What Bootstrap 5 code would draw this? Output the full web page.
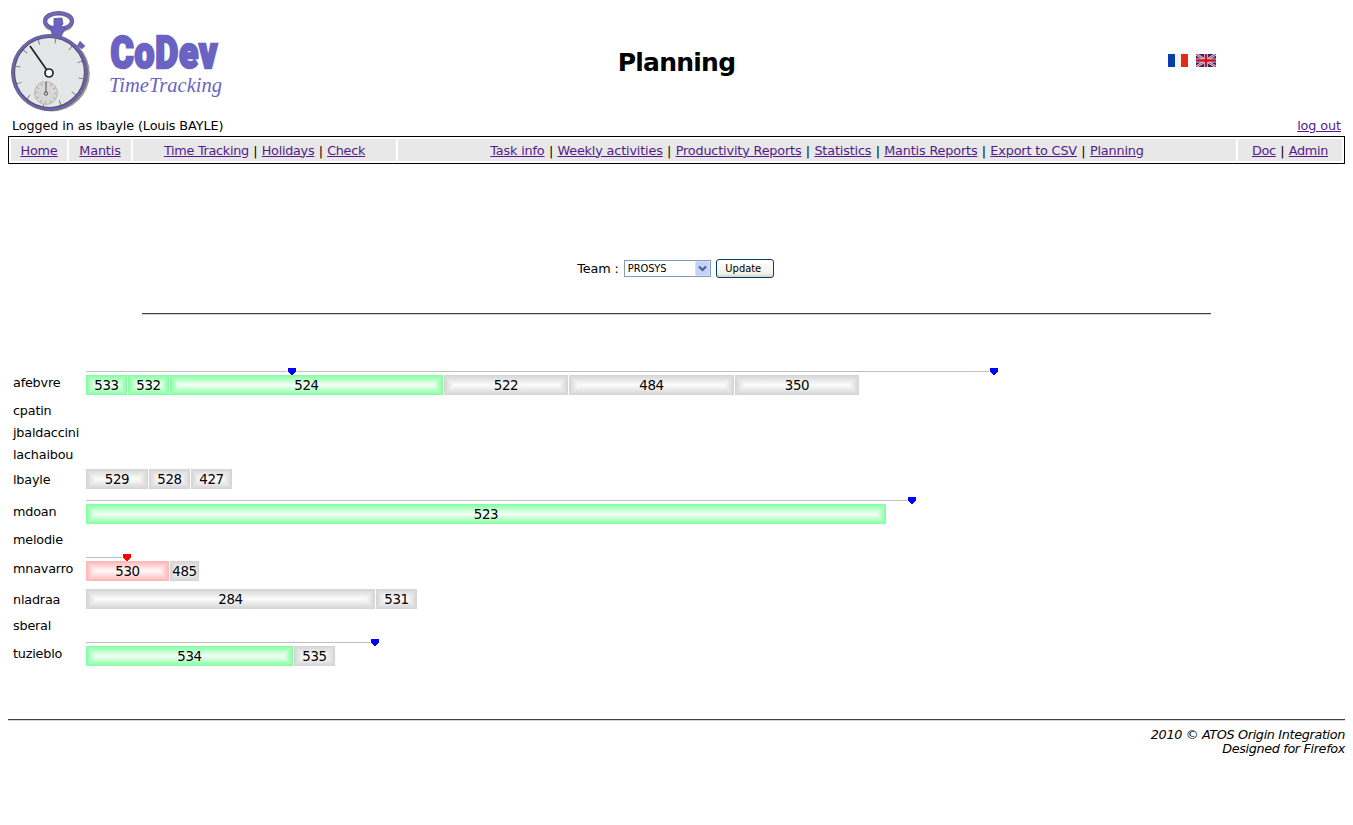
<!DOCTYPE html>
<html lang="en">
<head>
<meta charset="utf-8">
<title>Planning</title>
<link rel="stylesheet" href="https://cdn.jsdelivr.net/npm/bootstrap@5.3.0/dist/css/bootstrap.min.css">
<style>
body{font-family:"DejaVu Sans",Verdana,sans-serif;font-size:12.8px;line-height:15px;color:#000;background:#fff;padding:8px 8px 0;letter-spacing:-.1px}
a{color:#551a8b;text-decoration:underline}
.top-row{height:109px}
.side{flex:1 1 0}
h1{font-size:25px;font-weight:700;letter-spacing:-.75px;line-height:30px;margin:0}
.flag-box{gap:8px}
.flag-box svg{width:20px;height:13px;display:block;margin-bottom:5px}
.flag-box svg:last-child{margin-right:129px}
.login-row{height:19px;padding:1px 4px 0}
.menu-bar{border:1px solid #000;height:28px;padding:2px;gap:2px;letter-spacing:-.16px}
.menu-cell{background:#e8e8e8;height:22px;display:flex;align-items:center;justify-content:center;gap:4.4px}
.cell-home{width:56px}.cell-mantis{width:62px}
.cell-time{width:263px;letter-spacing:-.28px}
.cell-doc{width:104px;letter-spacing:-.28px}
.team-row{height:149px;padding-top:95px;gap:5px;padding-right:2px}
.team-label{padding-top:2px}
.team-select{width:87px;height:17px;border:1px solid #7f9db9;margin-top:1px;font-size:11px;line-height:16px;font-family:"DejaVu Sans Condensed","DejaVu Sans",sans-serif;letter-spacing:-.1px;padding-left:3px}
.team-arrow{width:15px;height:15px}
.update-btn{width:58px;height:19px;border:1px solid #003c74;border-radius:3px;background:linear-gradient(#fff,#f2f1ea 80%,#d6d0c5);font-size:11px;line-height:18px;font-family:"DejaVu Sans Condensed","DejaVu Sans",sans-serif;letter-spacing:0;padding:0 3px 0 0;color:#000}
.rule{border-top:1px solid #404040;border-bottom:1px solid #d4d4d4;height:2px}
.rule-mid{margin:0 134px 51px}
.who{width:73px;padding-bottom:2px;letter-spacing:-.2px}
.plan-row{height:22px;padding-left:5px}
.plan-row.h23{height:23px}
.plan-row.bars{height:29px}
.plan-row.dated{height:34px}
.lane{padding-top:3px;gap:1px}
.dated .lane{padding-top:9px}
.task{height:20px;position:relative;text-align:center;line-height:22px;font-size:13.4px;letter-spacing:-.3px;--e:#d3d3d3;--m:#fcfcfc;background:linear-gradient(var(--e),var(--m) 50%,var(--e))}
.task.ok{--e:#80ff9f;--m:#f6fff8}
.task.late{--e:#ffb3b3;--m:#fffafa}
.task::before,.task::after{content:"";position:absolute;top:0;bottom:0;width:10px}
.task::before{left:0;background:linear-gradient(to right,var(--e),var(--m));clip-path:polygon(0 0,100% 50%,0 100%)}
.task::after{right:0;background:linear-gradient(to left,var(--e),var(--m));clip-path:polygon(100% 0,0 50%,100% 100%)}
.task span{position:relative;z-index:1}
.dates{position:absolute;left:0;top:5px;height:1px;background:#c0c0c0}
.pin{position:absolute;top:2px;width:10px;height:7px;margin-left:-5px;color:#00f}
.pin.late{color:red}
.rule-foot{margin-top:48px}
footer{font-style:italic;line-height:14px;padding-top:7px;text-align:right;letter-spacing:-.35px}
</style>
<script src="https://cdn.jsdelivr.net/npm/bootstrap@5.3.0/dist/js/bootstrap.bundle.min.js"></script>
</head>
<body>
<svg class="d-none"><defs>
<symbol id="pin" viewBox="0 0 10 7"><path fill="#fff" d="M0 0h10v4H0z"/><path fill="currentColor" d="M1 0h8v4h-1v1h-1v1h-1v1h-2v-1h-1v-1h-1v-1h-1z"/></symbol>
</defs></svg>

<header class="d-flex top-row align-items-center">
  <div class="side align-self-start">
    <svg width="220" height="106" viewBox="8 8 220 106" class="d-block">
      <g fill="none">
        <ellipse cx="58.500" cy="22.500" rx="13.500" ry="8.500" stroke="#aaa" stroke-width="3.500"/>
        <ellipse cx="58.500" cy="21" rx="13.500" ry="8" stroke="#57547a" stroke-width="4"/>
        <ellipse cx="58.500" cy="21" rx="13.500" ry="8" stroke="#7068c4" stroke-width="2.400"/>
      </g>
      <path d="M54 18.500l8-.5 1 6-2 2 4 2-4 9h-8l-3-10 4-1z" fill="#6b63c4" stroke="#57529a" stroke-width=".8"/>
      <circle cx="51.800" cy="73.500" r="38" fill="#999"/>
      <circle cx="49.500" cy="72.500" r="38" fill="#6b63c4" stroke="#666"/>
      <circle cx="49.500" cy="72.500" r="35" fill="#e4e7e7" stroke="#55546a" stroke-width="1.200"/>
      <path d="M77 46l3-5 5 5-3 3z" fill="#6b63c4" stroke="#777" stroke-width=".5"/>
      <circle cx="49.500" cy="72.500" r="32" fill="none" stroke="#666" stroke-width="5" pathLength="360" stroke-dasharray="1.400 28.600" stroke-dashoffset="-10"/>
      <circle cx="46" cy="93" r="11.500" fill="#d9d6d6" stroke="#bbb7b7"/>
      <circle cx="46" cy="93" r="9.500" fill="none" stroke="#888" stroke-width="3" pathLength="360" stroke-dasharray="3 27"/>
      <path d="M46 92V82" stroke="#555"/><circle cx="46" cy="93.500" r="1.700" fill="#ddd" stroke="#444"/>
      <path d="M46.500 69.500L30 46" stroke="#222" stroke-width="1.700"/><circle cx="49" cy="73" r="4" fill="#fff" stroke="#222" stroke-width="1.700"/>
      <text x="110.500" y="68" textLength="107.500" lengthAdjust="spacingAndGlyphs" font-family="Roboto" font-weight="900" font-size="43.500" letter-spacing="1" fill="#6b63c4" stroke="#6b63c4" stroke-width="2.400">CoDev</text>
      <text x="109" y="92" textLength="113" lengthAdjust="spacingAndGlyphs" font-family="Liberation Serif" font-style="italic" font-size="21.500" letter-spacing="0" fill="#6b63c4">TimeTracking</text>
    </svg>
  </div>
  <h1 class="text-center">Planning</h1>
  <div class="side d-flex justify-content-end flag-box">
    <svg viewBox="0 0 20 13"><path fill="#f4f4f4" d="M0 0h20v13H0z"/><path fill="#0b3da8" d="M0 0h7v13H0z"/><path fill="#e62a18" d="M13 0h7v13h-7z"/></svg>
    <svg viewBox="0 0 20 13"><path fill="#27296f" d="M0 0h20v13H0z"/><path stroke="#e4dbe2" stroke-width="2.600" d="M0 0l20 13M20 0L0 13"/><path stroke="#d0263a" d="M0 0l20 13M20 0L0 13"/><path stroke="#e4dbe2" stroke-width="4" d="M10 0v13M0 6.500h20"/><path stroke="#c8152d" stroke-width="2.600" d="M10 0v13M0 6.500h20"/></svg>
  </div>
</header>

<div class="d-flex justify-content-between login-row"><span>Logged in as lbayle (Louis BAYLE)</span><a href="#">log out</a></div>

<nav class="menu-bar d-flex">
  <div class="menu-cell cell-home"><a href="#">Home</a></div>
  <div class="menu-cell cell-mantis"><a href="#">Mantis</a></div>
  <div class="menu-cell cell-time"><a href="#">Time Tracking</a><span>|</span><a href="#">Holidays</a><span>|</span><a href="#">Check</a></div>
  <div class="menu-cell flex-grow-1"><a href="#">Task info</a><span>|</span><a href="#">Weekly activities</a><span>|</span><a href="#">Productivity Reports</a><span>|</span><a href="#">Statistics</a><span>|</span><a href="#">Mantis Reports</a><span>|</span><a href="#">Export to CSV</a><span>|</span><a href="#">Planning</a></div>
  <div class="menu-cell cell-doc"><a href="#">Doc</a><span>|</span><a href="#">Admin</a></div>
</nav>

<main>
  <form class="d-flex justify-content-center align-items-start team-row">
    <span class="team-label">Team :</span>
    <div class="team-select d-flex justify-content-between"><span>PROSYS</span>
      <svg class="team-arrow" viewBox="0 0 15 15"><rect x=".5" y=".5" width="14" height="14" rx="1" fill="#c3d3fd" stroke="#d3dffb"/><path d="M4 5.500l3.500 3.500 3.500-3.500" fill="none" stroke="#4d6185" stroke-width="2.200"/></svg></div>
    <button type="button" class="update-btn">Update</button>
  </form>
  <div class="rule rule-mid"></div>

  <section>
    <div class="plan-row dated d-flex align-items-center"><div class="who">afebvre</div><div class="lane d-flex align-self-start position-relative">
      <div class="dates" style="width:904px"></div><svg class="pin" style="left:206px"><use href="#pin"/></svg><svg class="pin" style="left:908px"><use href="#pin"/></svg>
      <div class="task ok" style="width:41px"><span>533</span></div><div class="task ok" style="width:41px"><span>532</span></div><div class="task ok" style="width:273px"><span>524</span></div><div class="task" style="width:124px"><span>522</span></div><div class="task" style="width:165px"><span>484</span></div><div class="task" style="width:124px"><span>350</span></div></div></div>
    <div class="plan-row d-flex align-items-center"><div class="who">cpatin</div></div>
    <div class="plan-row d-flex align-items-center"><div class="who">jbaldaccini</div></div>
    <div class="plan-row d-flex align-items-center"><div class="who">lachaibou</div></div>
    <div class="plan-row bars d-flex align-items-center"><div class="who">lbayle</div><div class="lane d-flex align-self-start">
      <div class="task" style="width:62px"><span>529</span></div><div class="task" style="width:41px"><span>528</span></div><div class="task" style="width:41px"><span>427</span></div></div></div>
    <div class="plan-row dated d-flex align-items-center"><div class="who">mdoan</div><div class="lane d-flex align-self-start position-relative">
      <div class="dates" style="width:822px"></div><svg class="pin" style="left:826px"><use href="#pin"/></svg>
      <div class="task ok" style="width:800px"><span>523</span></div></div></div>
    <div class="plan-row h23 d-flex align-items-center"><div class="who">melodie</div></div>
    <div class="plan-row dated d-flex align-items-center"><div class="who">mnavarro</div><div class="lane d-flex align-self-start position-relative">
      <div class="dates" style="width:37px"></div><svg class="pin late" style="left:41px"><use href="#pin"/></svg>
      <div class="task late" style="width:83px"><span>530</span></div><div class="task" style="width:29px"><span>485</span></div></div></div>
    <div class="plan-row bars d-flex align-items-center"><div class="who">nladraa</div><div class="lane d-flex align-self-start">
      <div class="task" style="width:289px"><span>284</span></div><div class="task" style="width:41px"><span>531</span></div></div></div>
    <div class="plan-row d-flex align-items-center"><div class="who">sberal</div></div>
    <div class="plan-row dated d-flex align-items-center"><div class="who">tuzieblo</div><div class="lane d-flex align-self-start position-relative">
      <div class="dates" style="width:285px"></div><svg class="pin" style="left:289px"><use href="#pin"/></svg>
      <div class="task ok" style="width:207px"><span>534</span></div><div class="task" style="width:41px"><span>535</span></div></div></div>
  </section>
</main>

<div class="rule rule-foot"></div>
<footer>2010 © ATOS Origin Integration<br>Designed for Firefox</footer>
</body>
</html>
